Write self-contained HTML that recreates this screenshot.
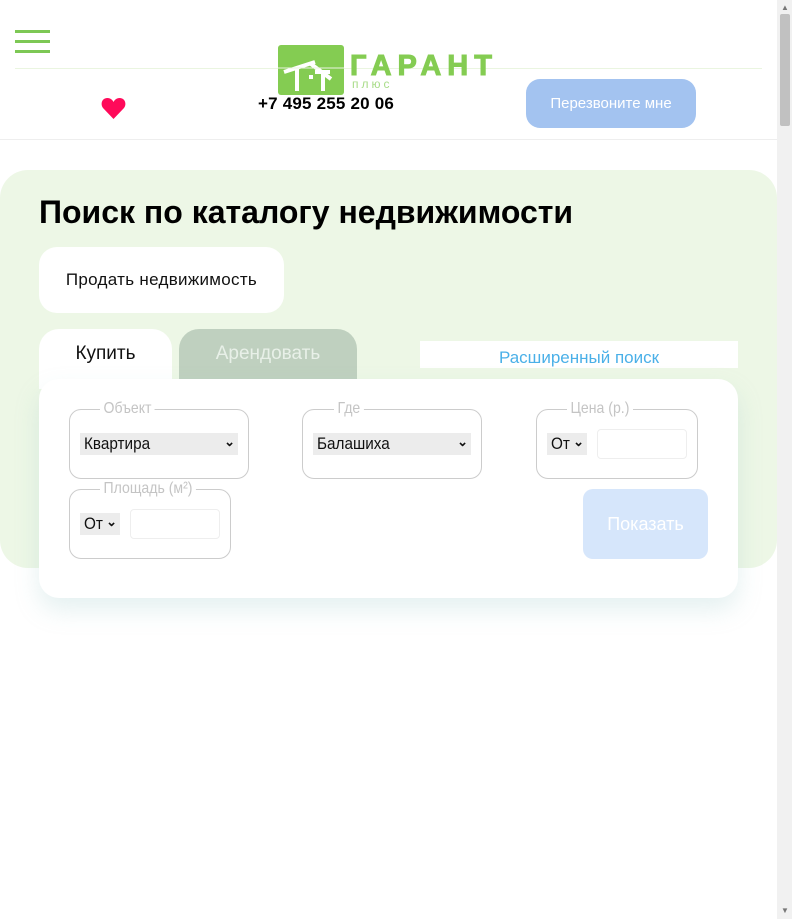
<!DOCTYPE html>
<html><head><meta charset="utf-8">
<style>
*{box-sizing:border-box;margin:0;padding:0}
body{width:792px;height:919px;background:#fff;font-family:"Liberation Sans",sans-serif;position:relative;overflow:hidden}
.a{position:absolute}
.hb{left:15px;width:35px;height:3px;background:#7dc855}
.fs{position:absolute;border:1px solid #ccc;border-radius:12px}
.lg{position:absolute;top:-11px;background:#fff;padding:0 4px;color:#c4c4c4;font-size:16px;line-height:19px;transform:scaleX(.88);transform-origin:left}
.sel{position:absolute;background:#ececec;height:22px;font-size:17px;line-height:22px;padding-left:4px;color:#111}
.sel span{display:inline-block;transform:scaleX(.9);transform-origin:left}
.sel i{position:absolute;right:3px;top:-2px;font-style:normal;font-size:13px;font-weight:bold}
.inp{position:absolute;border:1px solid #eee;border-radius:4px;width:90px;height:30px;background:#fff}
</style></head><body>
<div class="a hb" style="top:30px"></div>
<div class="a hb" style="top:40px"></div>
<div class="a hb" style="top:50px"></div>
<div class="a" style="left:15px;top:68px;width:747px;height:1px;background:#eaf5e0"></div>
<svg class="a" style="left:278px;top:45px" width="66" height="50" viewBox="0 0 66 50">
<rect width="66" height="50" rx="3" fill="#84cc52"/>
<path d="M6 27 L37 17 M19 24 V46 M33 19 L53 34 M45 28 V46 M37 27 H52" stroke="#fff" stroke-width="4" fill="none"/>
<rect x="31" y="30" width="4" height="4" fill="#fff"/>
<line x1="0" y1="23" x2="66" y2="23" stroke="#eaf5e0" stroke-width="1"/>
</svg>
<div class="a" style="left:350px;top:51px;color:#84cc52;font-weight:900;font-size:29px;letter-spacing:6px;line-height:30px;-webkit-text-stroke:1px #84cc52">ГАРАНТ</div>
<div class="a" style="left:352px;top:77px;color:#a8dc88;font-size:12px;letter-spacing:3px">плюс</div>
<svg class="a" style="left:101px;top:97px" width="25" height="23" viewBox="0 0 25 23"><path d="M12.5 22 L2 11 C-1 7 1 1 6.5 1 C9.5 1 11.5 3 12.5 5 C13.5 3 15.5 1 18.5 1 C24 1 26 7 23 11 Z" fill="#ff0a5a"/></svg>
<div class="a" style="left:258px;top:94px;font-weight:bold;font-size:17px;color:#000;letter-spacing:.2px">+7 495 255 20 06</div>
<div class="a" style="left:526px;top:79px;width:170px;height:49px;background:#a3c3f0;border-radius:14px;color:#fff;font-size:15px;line-height:49px;text-align:center">Перезвоните мне</div>
<div class="a" style="left:0;top:139px;width:777px;height:1px;background:#eee"></div>
<div class="a" style="left:0;top:170px;width:777px;height:398px;background:#edf7e6;border-radius:28px"></div>
<div class="a" style="left:39px;top:194px;font-weight:bold;font-size:32px;color:#000">Поиск по каталогу недвижимости</div>
<div class="a" style="left:39px;top:247px;width:245px;height:66px;background:#fff;border-radius:18px;font-size:17px;line-height:66px;text-align:center;color:#111;letter-spacing:.3px">Продать недвижимость</div>
<div class="a" style="left:39px;top:329px;width:133px;height:60px;background:#fff;border-radius:20px 20px 0 0;font-size:19px;text-align:center;padding-top:14px;color:#111">Купить</div>
<div class="a" style="left:179px;top:329px;width:178px;height:55px;background:#bfd0bf;border-radius:20px 20px 0 0;font-size:19px;text-align:center;padding-top:14px;color:#e8f0e8">Арендовать</div>
<div class="a" style="left:420px;top:341px;width:318px;height:27px;background:#fff;font-size:17px;line-height:33px;text-align:center;color:#4ab0e8">Расширенный поиск</div>
<div class="a" style="left:39px;top:379px;width:699px;height:219px;background:#fff;border-radius:20px;box-shadow:0 12px 24px rgba(150,200,200,.25)"></div>
<div class="fs" style="left:69px;top:409px;width:180px;height:70px"><div class="lg" style="left:30px">Объект</div><div class="sel" style="left:10px;top:23px;width:158px"><span>Квартира</span><i>⌄</i></div></div>
<div class="fs" style="left:302px;top:409px;width:180px;height:70px"><div class="lg" style="left:31px">Где</div><div class="sel" style="left:10px;top:23px;width:158px"><span>Балашиха</span><i>⌄</i></div></div>
<div class="fs" style="left:536px;top:409px;width:162px;height:70px"><div class="lg" style="left:30px">Цена (р.)</div><div class="sel" style="left:10px;top:23px;width:40px"><span>От</span><i>⌄</i></div><div class="inp" style="left:60px;top:19px"></div></div>
<div class="fs" style="left:69px;top:489px;width:162px;height:70px"><div class="lg" style="left:30px">Площадь (м²)</div><div class="sel" style="left:10px;top:23px;width:40px"><span>От</span><i>⌄</i></div><div class="inp" style="left:60px;top:19px"></div></div>
<div class="a" style="left:583px;top:489px;width:125px;height:70px;background:#d6e6fb;border-radius:10px;color:#fff;font-size:18px;line-height:70px;text-align:center">Показать</div>
<div class="a" style="left:777px;top:0;width:15px;height:919px;background:#f1f1f1"></div>
<div class="a" style="left:780px;top:14px;width:10px;height:112px;background:#c1c1c1;border-radius:2px"></div>
<div class="a" style="left:781px;top:3px;font-size:8px;color:#777">▲</div>
<div class="a" style="left:781px;top:906px;font-size:8px;color:#777">▼</div>
</body></html>
